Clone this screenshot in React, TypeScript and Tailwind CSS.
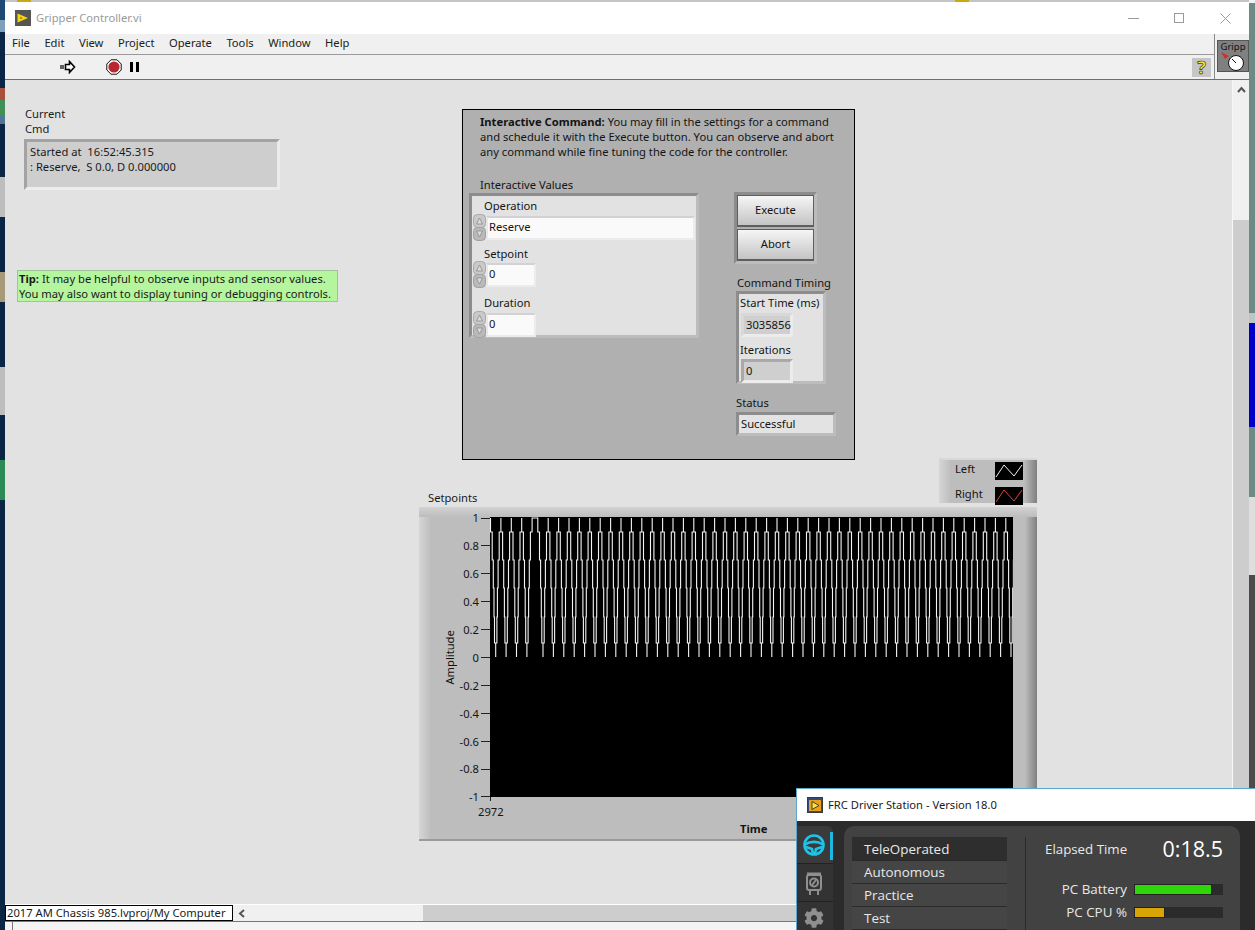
import { FaCog } from 'react-icons/fa'

const sunken =
  'border-[3px] border-t-[#a3a3a3] border-l-[#a3a3a3] border-b-[#ececec] border-r-[#ececec]'
const sunkenDark =
  'border-[3px] border-t-[#8c8c8c] border-l-[#8c8c8c] border-b-[#bcbcbc] border-r-[#bcbcbc]'

const menus = ['File', 'Edit', 'View', 'Project', 'Operate', 'Tools', 'Window', 'Help']
const yTicks = ['1', '0.8', '0.6', '0.4', '0.2', '0', '-0.2', '-0.4', '-0.6', '-0.8', '-1']

const leftStrip = [
  ['#1c4a75', 20],
  ['#7f9fba', 12],
  ['#0b2545', 56],
  ['#a8523c', 12],
  ['#3f8f56', 16],
  ['#4f7696', 8],
  ['#0b2545', 53],
  ['#bdbdbd', 40],
  ['#0b2545', 55],
  ['#a89a78', 30],
  ['#0b2545', 65],
  ['#bdbdbd', 48],
  ['#0b2545', 45],
  ['#2c8a55', 40],
  ['#0b2545', 430],
] as const

const rightStrip = [
  ['#f2f2f2', 3],
  ['#6c8b85', 310],
  ['#b9c6c4', 10],
  ['#0000c8', 104],
  ['#6c8b85', 70],
  ['#dedede', 78],
  ['#4b4b4b', 355],
] as const

// triangle wave, stair stepped like the sampled trace in the reference
function tracePath() {
  const half = 5.2
  const levels: [number, number][] = [
    [140, 0],
    [126, 1.2],
    [100, 1.7],
    [71, 2.4],
    [43, 3.5],
    [15, half],
  ]
  const top = 1
  let d = ''
  let x = -4.7
  for (let i = 0; i < 52 && x < 524; i++) {
    levels.forEach(([y, dx], l) => {
      const next = l + 1 < levels.length ? levels[l + 1][0] : top
      d += `${d ? 'L' : 'M'}${x + dx} ${y}L${x + dx} ${next}`
    })
    let peak = x + half
    if (i === 4) peak += 5.7
    for (let l = levels.length - 1; l >= 0; l--) {
      const y = l + 1 < levels.length ? levels[l + 1][0] : top
      const px = peak + half - levels[l][1]
      d += `L${px} ${y}L${px} ${levels[l][0]}`
    }
    x = peak + half
  }
  return d
}

function Spinner({ className = '' }: { className?: string }) {
  return (
    <svg width="13" height="27" viewBox="0 0 13 27" className={className}>
      <rect x="0.5" y="0.5" width="12" height="13" rx="4" fill="#c9c9c9" stroke="#a9a9a9" />
      <rect x="0.5" y="13.5" width="12" height="13" rx="4" fill="#b9b9b9" stroke="#a0a0a0" />
      <path d="M6.5 4L3.5 10H9.5Z" fill="#dcdcdc" stroke="#8a8a8a" strokeWidth="0.8" />
      <path d="M6.5 23L3.5 17H9.5Z" fill="#dcdcdc" stroke="#8a8a8a" strokeWidth="0.8" />
    </svg>
  )
}

function NumericRow({
  label,
  value,
  wide,
  tall,
}: {
  label: string
  value: string
  wide?: boolean
  tall?: boolean
}) {
  return (
    <div className="flex flex-col">
      <span className={`ml-[12px] leading-[15px] ${tall ? 'h-[16px]' : 'h-[15px]'}`}>{label}</span>
      <div className="flex items-center">
        <Spinner className="ml-[1px] shrink-0" />
        <div
          className={`flex h-[24px] items-center border-2 border-t-[#d2d2d2] border-l-[#e8e8e8] border-r-[#ececec] border-b-[#ececec] bg-[#fafafa] pl-[1px] ${
            wide ? 'w-[209px]' : 'w-[50px]'
          }`}
        >
          {value}
        </div>
      </div>
    </div>
  )
}

function Indicator({ value, className }: { value: string; className: string }) {
  return (
    <div className={`flex h-[24px] w-[52px] items-center border-[3px] pl-[2px] ${className}`}>{value}</div>
  )
}

function CommandPanel() {
  return (
    <div className="absolute left-[457px] top-[29px] h-[351px] w-[393px] border border-black bg-[#b0b0b0] text-[#141414]">
      <p className="ml-[17px] mt-[4px] leading-[15px]">
        <b>Interactive Command:</b> You may fill in the settings for a command
        <br />
        and schedule it with the Execute button. You can observe and abort
        <br />
        any command while fine tuning the code for the controller.
      </p>
      <div className="mt-[18px] flex items-start">
        <div className="ml-[6px] w-[230px]">
          <div className="ml-[11px] h-[16px] leading-[15px]">Interactive Values</div>
          <div className={`h-[145px] bg-[#e2e2e2] pt-[2px] ${sunkenDark}`}>
            <div className="mb-[2px]">
              <NumericRow label="Operation" value="Reserve" wide tall />
            </div>
            <div className="mb-[7px] mt-[5px]">
              <NumericRow label="Setpoint" value="0" />
            </div>
            <NumericRow label="Duration" value="0" tall />
          </div>
        </div>
        <div className="ml-[35px] flex w-[102px] flex-col pt-[15px]">
          <div className={`flex h-[72px] w-[83px] flex-col gap-[2px] bg-[#b0b0b0] ${sunkenDark}`}>
            {['Execute', 'Abort'].map((b) => (
              <div
                key={b}
                className="flex h-[32px] items-center justify-center border border-b-2 border-[#5e5e5e] bg-gradient-to-b from-[#f6f6f6] to-[#c4c4c4]"
              >
                {b}
              </div>
            ))}
          </div>
          <div className="ml-[3px] mt-[11px] h-[16px] leading-[15px]">Command Timing</div>
          <div className={`ml-[2px] h-[93px] w-[90px] bg-[#e2e2e2] pl-[1px] ${sunkenDark}`}>
            <div className="h-[19px] leading-[17px]">Start Time (ms)</div>
            <Indicator
              value="3035856"
              className="ml-[1px] border-t-[#d8d8d8] border-l-[#d8d8d8] border-r-[#ececec] border-b-[#ececec] bg-[#cfcfcf]"
            />
            <div className="mt-[4px] h-[18px] leading-[18px]">Iterations</div>
            <Indicator
              value="0"
              className="ml-[1px] border-t-[#a9a9a9] border-l-[#a9a9a9] border-r-[#ececec] border-b-[#ececec] bg-[#cfcfcf]"
            />
          </div>
          <div className="ml-[2px] mt-[11px] h-[17px] leading-[15px]">Status</div>
          <div className={`ml-[2px] flex h-[24px] w-[100px] items-center bg-[#e3e3e3] pl-[2px] ${sunkenDark}`}>
            Successful
          </div>
        </div>
      </div>
    </div>
  )
}

function LegendSwatch({ color }: { color: string }) {
  return (
    <svg width="28" height="18" viewBox="0 0 28 18" className="bg-black">
      <path d="M1 15L9 3L19 14L27 3" fill="none" stroke={color} strokeWidth="1" />
    </svg>
  )
}

function Legend() {
  return (
    <div className="absolute left-[934px] top-[378px] flex h-[45px] w-[98px] border-t-2 border-t-[#d8d8d8] bg-[#bdbdbd]">
      <div className="w-[12px] bg-gradient-to-r from-[#d6d6d6] to-[#bdbdbd]" />
      <div className="flex flex-1 flex-col gap-[5px] pt-[1px] text-[#141414]">
        <div className="flex items-center justify-between pl-[4px]">
          <span className="mb-[3px]">Left</span>
          <LegendSwatch color="#f2f2f2" />
        </div>
        <div className="flex items-center justify-between pl-[4px]">
          <span className="mb-[3px]">Right</span>
          <LegendSwatch color="#d9453f" />
        </div>
      </div>
      <div className="ml-[1px] w-[13px] bg-gradient-to-r from-[#bdbdbd] to-[#808080]" />
    </div>
  )
}

function Graph() {
  return (
    <div className="absolute left-[414px] top-[427px] flex h-[334px] w-[618px] flex-col border-b-2 border-b-[#9a9a9a] bg-[#bdbdbd] text-[#141414]">
      <div className="h-[10px] shrink-0 bg-gradient-to-b from-[#d2d2d2] to-[#bdbdbd]" />
      <div className="flex flex-1">
        <div className="w-[12px] shrink-0 bg-gradient-to-r from-[#d6d6d6] to-[#bdbdbd]" />
        <div className="relative w-[59px] shrink-0">
          <span className="absolute left-[-26px] top-[132px] w-[90px] -rotate-90 text-center">Amplitude</span>
          <div className="ml-auto mt-px flex h-[279px] w-[46px] flex-col justify-between">
            {yTicks.map((t) => (
              <div key={t} className="flex h-0 items-center justify-end gap-[2px] leading-none">
                <span>{t}</span>
                <span className="h-px w-[9px] shrink-0 bg-[#222]" />
              </div>
            ))}
          </div>
        </div>
        <div className="flex w-[523px] shrink-0 flex-col">
          <div className="h-[280px] bg-black">
            <svg width="523" height="280" viewBox="0 0 523 280">
              <path d={tracePath()} fill="none" stroke="#f4f4f4" strokeWidth="1.1" />
            </svg>
          </div>
          <div className="relative flex-1">
            <span className="absolute left-0 top-0 h-[4px] w-px bg-[#222]" />
            <span className="absolute left-[-12px] top-[7px] leading-[15px]">2972</span>
            <b className="absolute left-[250px] top-[24px] leading-[15px]">Time</b>
          </div>
        </div>
        <div className="flex-1" />
        <div className="w-[12px] shrink-0 bg-gradient-to-r from-[#bdbdbd] to-[#808080]" />
      </div>
    </div>
  )
}

function Bar({ label, fill }: { label: string; fill: string }) {
  return (
    <div className="flex h-[11px] items-center justify-end gap-[7px]">
      <span>{label}</span>
      <div className="h-[11px] w-[89px] shrink-0 bg-[#2b2b2b]">
        <div className={`h-full border border-[#222] ${fill}`} />
      </div>
    </div>
  )
}

function DriverStation() {
  const rows = ['TeleOperated', 'Autonomous', 'Practice', 'Test']
  return (
    <div className="absolute left-[796px] top-[788px] flex h-[142px] w-[459px] flex-col border-l border-t border-[#5aa7d0] text-[#e8e8e8] [font-family:'Open_Sans',sans-serif]">
      <div className="flex h-[32px] shrink-0 items-center gap-[5px] bg-white pl-[10px] text-[#1a1a1a] [font-family:'Noto_Sans',sans-serif]">
        <svg width="16" height="16" viewBox="0 0 16 16">
          <rect x="0.5" y="0.5" width="15" height="15" fill="#2f4f7a" stroke="#3b3b3b" />
          <rect x="2" y="3" width="12" height="11" fill="#e8a020" />
          <path d="M5 4.5L12 8.5L5 12.5Z" fill="#ffe23a" stroke="#222" strokeWidth="0.8" />
        </svg>
        FRC Driver Station - Version 18.0
      </div>
      <div className="flex min-h-0 flex-1 bg-[#2b2b2b]">
        <div className="flex w-[36px] shrink-0 flex-col pt-[5px]">
          <div className="relative flex h-[38px] items-center justify-center rounded-tr-md border-b border-[#222] bg-[#3a3a3a]">
            <svg width="24" height="24" viewBox="0 0 24 24" fill="none" stroke="#1fc3e8" strokeWidth="2.6" className="mr-[2px]">
              <circle cx="12" cy="12" r="9.5" />
              <path d="M3 11.5C8 8 16 8 21 11.5" />
              <path d="M4 14L10 16L11 21M20 14L14 16L13 21" />
            </svg>
            <span className="absolute right-0 top-[6px] h-[28px] w-[3px] bg-[#1fb6e0]" />
          </div>
          <div className="flex h-[38px] items-center justify-center border-b border-[#222] bg-[#333]">
            <svg width="18" height="26" viewBox="0 0 18 26" fill="none" stroke="#8f8f8f" strokeWidth="2" className="mr-[2px]">
              <path d="M3 5V3.5H15V5" />
              <rect x="2" y="5" width="14" height="15" rx="2" />
              <circle cx="9" cy="12.5" r="4" />
              <path d="M7 15L11 10M5 20V25M13 20V25" />
            </svg>
          </div>
          <div className="flex h-[28px] items-start justify-center bg-[#333] pt-[6px]">
            <FaCog size={20} color="#8f8f8f" className="mr-[2px]" />
          </div>
        </div>
        <div className="ml-[11px] mr-[15px] mt-[5px] flex flex-1 rounded-t-[10px] bg-[#424242] pl-[8px] pt-[11px]">
          <div className="flex w-[155px] shrink-0 flex-col text-[13.4px]">
            {rows.map((r, i) => (
              <div
                key={r}
                className={`flex shrink-0 items-center border-b border-[#2a2a2a] pl-[12px] ${
                  i === 0 ? 'h-[24px] bg-[#2e2e2e] pt-px' : 'h-[23px] bg-[#454545]'
                }`}
              >
                {r}
              </div>
            ))}
          </div>
          <div className="ml-[18px] w-[198px] border-l border-[#2b2b2b] pl-[19px]">
            <div className="flex h-[26px] items-center justify-between">
              <span className="text-[13.3px]">Elapsed Time</span>
              <span className="mb-[3px] text-[21.5px] leading-none text-white">0:18.5</span>
            </div>
            <div className="mt-[21px] flex flex-col gap-[12px] text-[13.4px]">
              <Bar label="PC Battery" fill="w-[78px] bg-[#2fd60a]" />
              <Bar label="PC CPU %" fill="w-[31px] bg-[#d9a406]" />
            </div>
          </div>
        </div>
      </div>
    </div>
  )
}

function ViIcon() {
  return (
    <div className="relative h-[32px] w-[32px] border border-[#555] bg-[#808080] text-center text-[9.5px] leading-[12px] text-[#111]">
      Gripp
      <svg width="30" height="20" viewBox="0 0 30 20" className="absolute left-0 top-[10px]">
        <circle cx="18" cy="12" r="7.5" fill="#fff" stroke="#111" />
        <path d="M18 12L14 8" stroke="#111" />
        <path d="M3 1L11 5L7 8Z" fill="#d0302a" />
      </svg>
    </div>
  )
}

export default function App() {
  return (
    <div className="relative flex h-[930px] w-[1255px] overflow-hidden whitespace-nowrap bg-[#0b2545] text-[11.2px] text-[#1a1a1a] [font-family:'Noto_Sans',sans-serif]">
      <div className="flex w-[5px] shrink-0 flex-col">
        {leftStrip.map(([c, h], i) => (
          <div key={i} className="shrink-0" style={{ backgroundColor: c, height: h }} />
        ))}
      </div>

      <div className="flex w-[1244px] shrink-0 flex-col">
        <div className="flex h-[2px] shrink-0 bg-[#c4c4c4] pl-[12px]">
          <span className="w-[14px] bg-[#c9a812]" />
          <span className="ml-[924px] w-[14px] bg-[#c9a812]" />
        </div>
        <div className="flex h-[32px] shrink-0 items-center bg-white pl-[10px] text-[#9a9a9a]">
          <svg width="16" height="16" viewBox="0 0 16 16" className="mr-[5px]">
            <rect width="16" height="16" fill="#555" />
            <path d="M2.5 3.5L13 8L2.5 12.5Z" fill="#f5d60c" />
            <circle cx="6" cy="8" r="1" fill="#a07a00" />
          </svg>
          Gripper Controller.vi
          <div className="ml-auto flex items-center gap-[35px] pr-[18px]">
            <span className="h-px w-[11px] bg-[#9a9a9a]" />
            <span className="h-[10px] w-[10px] border border-[#9a9a9a]" />
            <svg width="11" height="11" viewBox="0 0 11 11" stroke="#9a9a9a" className="ml-[1px]">
              <path d="M0.5 0.5L10.5 10.5M10.5 0.5L0.5 10.5" />
            </svg>
          </div>
        </div>

        <div className="flex h-[46px] shrink-0 border-b border-[#6e6e6e]">
          <div className="flex flex-1 flex-col">
            <div className="flex h-[21px] shrink-0 items-center gap-[14.5px] border-b border-[#9a9a9a] bg-[#f0f0f0] pb-[2px] pl-[7px] text-[#202020]">
              {menus.map((m) => (
                <span key={m}>{m}</span>
              ))}
            </div>
            <div className="flex flex-1 items-center bg-[#f0f0f0] pl-[55px]">
              <svg width="16" height="14" viewBox="0 0 16 14" fill="none" stroke="#000">
                <path d="M5.5 4.5H9.5V1.5L14.5 7L9.5 12.5V9.5H5.5Z" strokeWidth="1.6" fill="#fff" />
                <path d="M1 5V9M3 5V9" strokeWidth="1.2" />
              </svg>
              <svg width="16" height="16" viewBox="0 0 16 16" className="ml-[30px]">
                <path d="M5 .8H11L15.2 5V11L11 15.2H5L.8 11V5Z" fill="#fff" stroke="#111" />
                <circle cx="8" cy="8" r="5.6" fill="#b8282c" />
              </svg>
              <span className="ml-[8px] h-[10px] w-[3px] bg-black" />
              <span className="ml-[3px] h-[10px] w-[3px] bg-black" />
              <div className="ml-auto mr-[3px] flex h-[19px] w-[19px] items-center justify-center bg-[#c6c6c6] text-[18px] font-bold leading-none text-[#f7ee3c] [-webkit-text-stroke:0.7px_#333]">
                ?
              </div>
            </div>
          </div>
          <div className="flex w-[35px] shrink-0 justify-center border-l border-[#8a8a8a] bg-[#f0f0f0] pl-[2px] pt-[6px]">
            <ViIcon />
          </div>
        </div>

        <div className="flex min-h-0 flex-1">
          <div className="relative flex-1 border-r border-[#f7f7f7] bg-[#e2e2e2] text-[#1a1a1a]">
            <div className="absolute left-[20px] top-[26px] leading-[15px]">
              Current
              <br />
              Cmd
            </div>
            <div className={`absolute left-[19px] top-[59px] h-[51px] w-[256px] bg-[#cecece] pl-[3px] pt-[2px] leading-[15px] ${sunken}`}>
              Started at&nbsp; 16:52:45.315
              <br />: Reserve,&nbsp; S 0.0, D 0.000000
            </div>
            <div className="absolute left-[12px] top-[190px] h-[32px] w-[321px] border border-[#9fc596] bg-[#b4f59e] pl-[1px] leading-[15px]">
              <b>Tip:</b> It may be helpful to observe inputs and sensor values.
              <br />
              You may also want to display tuning or debugging controls.
            </div>
            <CommandPanel />
            <Legend />
            <div className="absolute left-[423px] top-[410px] leading-[15px]">Setpoints</div>
            <Graph />
          </div>
          <div className="flex w-[16px] shrink-0 flex-col bg-[#cdcdcd]">
            <div className="flex h-[140px] justify-center bg-[#f0f0f0] pt-[6px]">
              <svg width="9" height="7" viewBox="0 0 9 7" fill="none" stroke="#555" strokeWidth="2">
                <path d="M1 6L4.5 2L8 6" />
              </svg>
            </div>
          </div>
        </div>

        <div className="flex h-[17px] shrink-0 items-stretch border-t border-white bg-[#f0f0f0]">
          <div className="w-[228px] shrink-0 border border-black bg-white pl-[1px] leading-[14px]">
            2017 AM Chassis 985.lvproj/My Computer
          </div>
          <div className="flex w-[190px] shrink-0 items-center pl-[5px]">
            <svg width="7" height="9" viewBox="0 0 7 9" fill="none" stroke="#555" strokeWidth="2">
              <path d="M6 1L2 4.5L6 8" />
            </svg>
          </div>
          <div className="flex-1 bg-[#cdcdcd]" />
        </div>
        <div className="h-[9px] shrink-0 border-t border-[#777] bg-[#f4f4f4] pl-[7px]">
          <div className="h-full w-px bg-[#777]" />
        </div>
      </div>

      <div className="flex w-[6px] shrink-0 flex-col">
        {rightStrip.map(([c, h], i) => (
          <div key={i} className="shrink-0" style={{ backgroundColor: c, height: h }} />
        ))}
      </div>

      <DriverStation />
    </div>
  )
}
